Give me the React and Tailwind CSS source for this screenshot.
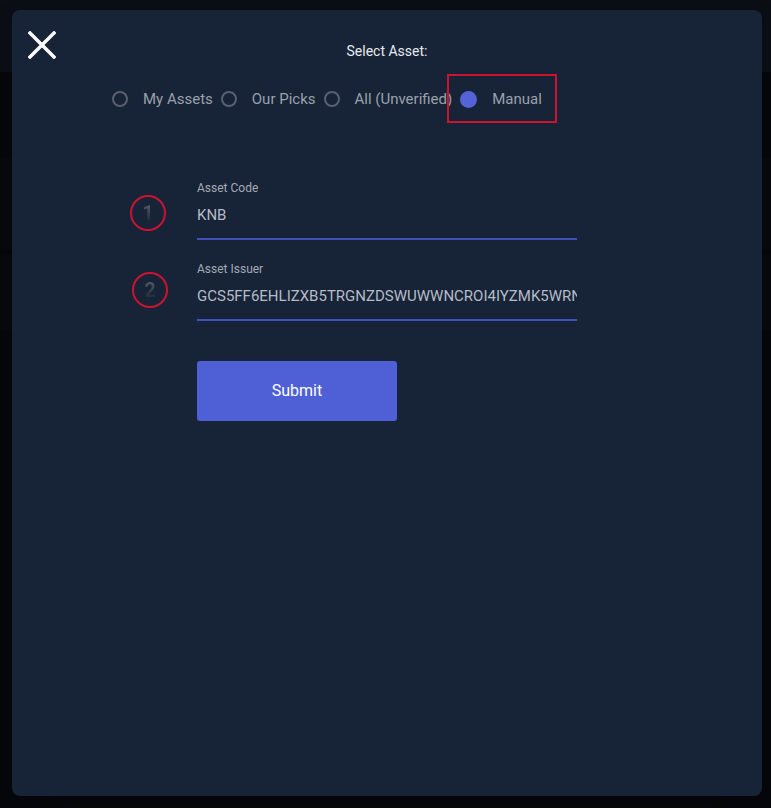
import React from 'react';

const FONT = { fontFamily: 'Roboto, "Liberation Sans", sans-serif' };

function Radio({ label, checked }) {
  return (
    <label className="flex items-center cursor-pointer">
      {checked ? (
        <span className="w-[17px] h-[17px] rounded-full bg-[#5563d9]" />
      ) : (
        <span className="w-4 h-4 rounded-full border-2 border-[#596170]" />
      )}
      <span className="ml-[15px] mr-[8px] text-[15px] leading-6 text-[#9aa1ab]">{label}</span>
    </label>
  );
}

function Field({ label, value }) {
  return (
    <div className="w-[380px]">
      <div className="text-[12px] leading-4 text-[#a3abb6]">{label}</div>
      <div className="mt-[7px] text-[15px] leading-6 text-[#b3bcc7] whitespace-nowrap overflow-hidden">{value}</div>
      <div className="mt-[11px] h-[2px] bg-[#4150b8]" />
    </div>
  );
}

// red annotation ring with a faded step number
function Marker({ n, className }) {
  return (
    <div className={`absolute w-[36px] h-[36px] rounded-full border-2 border-[#cc1430] flex items-center justify-center ${className}`}>
      <span className="text-[20px] font-bold leading-none bg-gradient-to-b from-[#566070] to-[#1e2634] bg-clip-text text-transparent">{n}</span>
    </div>
  );
}

export default function App() {
  return (
    <div className="relative h-[808px] w-full overflow-hidden bg-[#05070a]" style={FONT}>
      {/* page behind the overlay */}
      <div className="absolute inset-x-0 top-0 h-[72px] bg-[#0b0f15]" />
      <div className="absolute inset-x-0 top-[158px] h-[92px] bg-[#07090d]" />
      <div className="absolute inset-x-0 top-[255px] h-[75px] bg-[#07090d]" />

      <div className="relative pt-[10px] pl-[12px]">
        <div className="relative w-[750px] h-[786px] rounded-lg bg-[#172336] shadow-2xl">
          <button className="absolute left-[16px] top-[21px] w-[28px] h-[28px]" aria-label="close">
            <svg viewBox="0 0 28 28" className="w-full h-full">
              <path d="M2 2 L26 26 M26 2 L2 26" stroke="#ffffff" strokeWidth="3.4" strokeLinecap="square" />
            </svg>
          </button>

          <div className="pt-[31px] text-center text-[14px] leading-5 text-[#e6e9ee]">Select Asset:</div>

          <div className="mt-[26px] pl-[100px] flex items-center">
            <Radio label="My Assets" />
            <Radio label="Our Picks" />
            <Radio label="All (Unverified)" />
            <Radio label="Manual" checked />
          </div>

          {/* annotation box */}
          <div className="absolute left-[435px] top-[64px] w-[110px] h-[49px] border-2 border-[#cc1430]" />

          <div className="mt-[69px] pl-[185px] flex flex-col gap-[21px]">
            <Field label="Asset Code" value="KNB" />
            <Field label="Asset Issuer" value="GCS5FF6EHLIZXB5TRGNZDSWUWWNCROI4IYZMK5WRNYXGAS7ALSQ4SWUF" />
            <button className="mt-[19px] w-[200px] h-[60px] rounded-[3px] bg-[#4f5fd6] text-white text-[16px]">Submit</button>
          </div>

          <Marker n="1" className="left-[118px] top-[185px]" />
          <Marker n="2" className="left-[120px] top-[262px]" />
        </div>
      </div>
    </div>
  );
}
